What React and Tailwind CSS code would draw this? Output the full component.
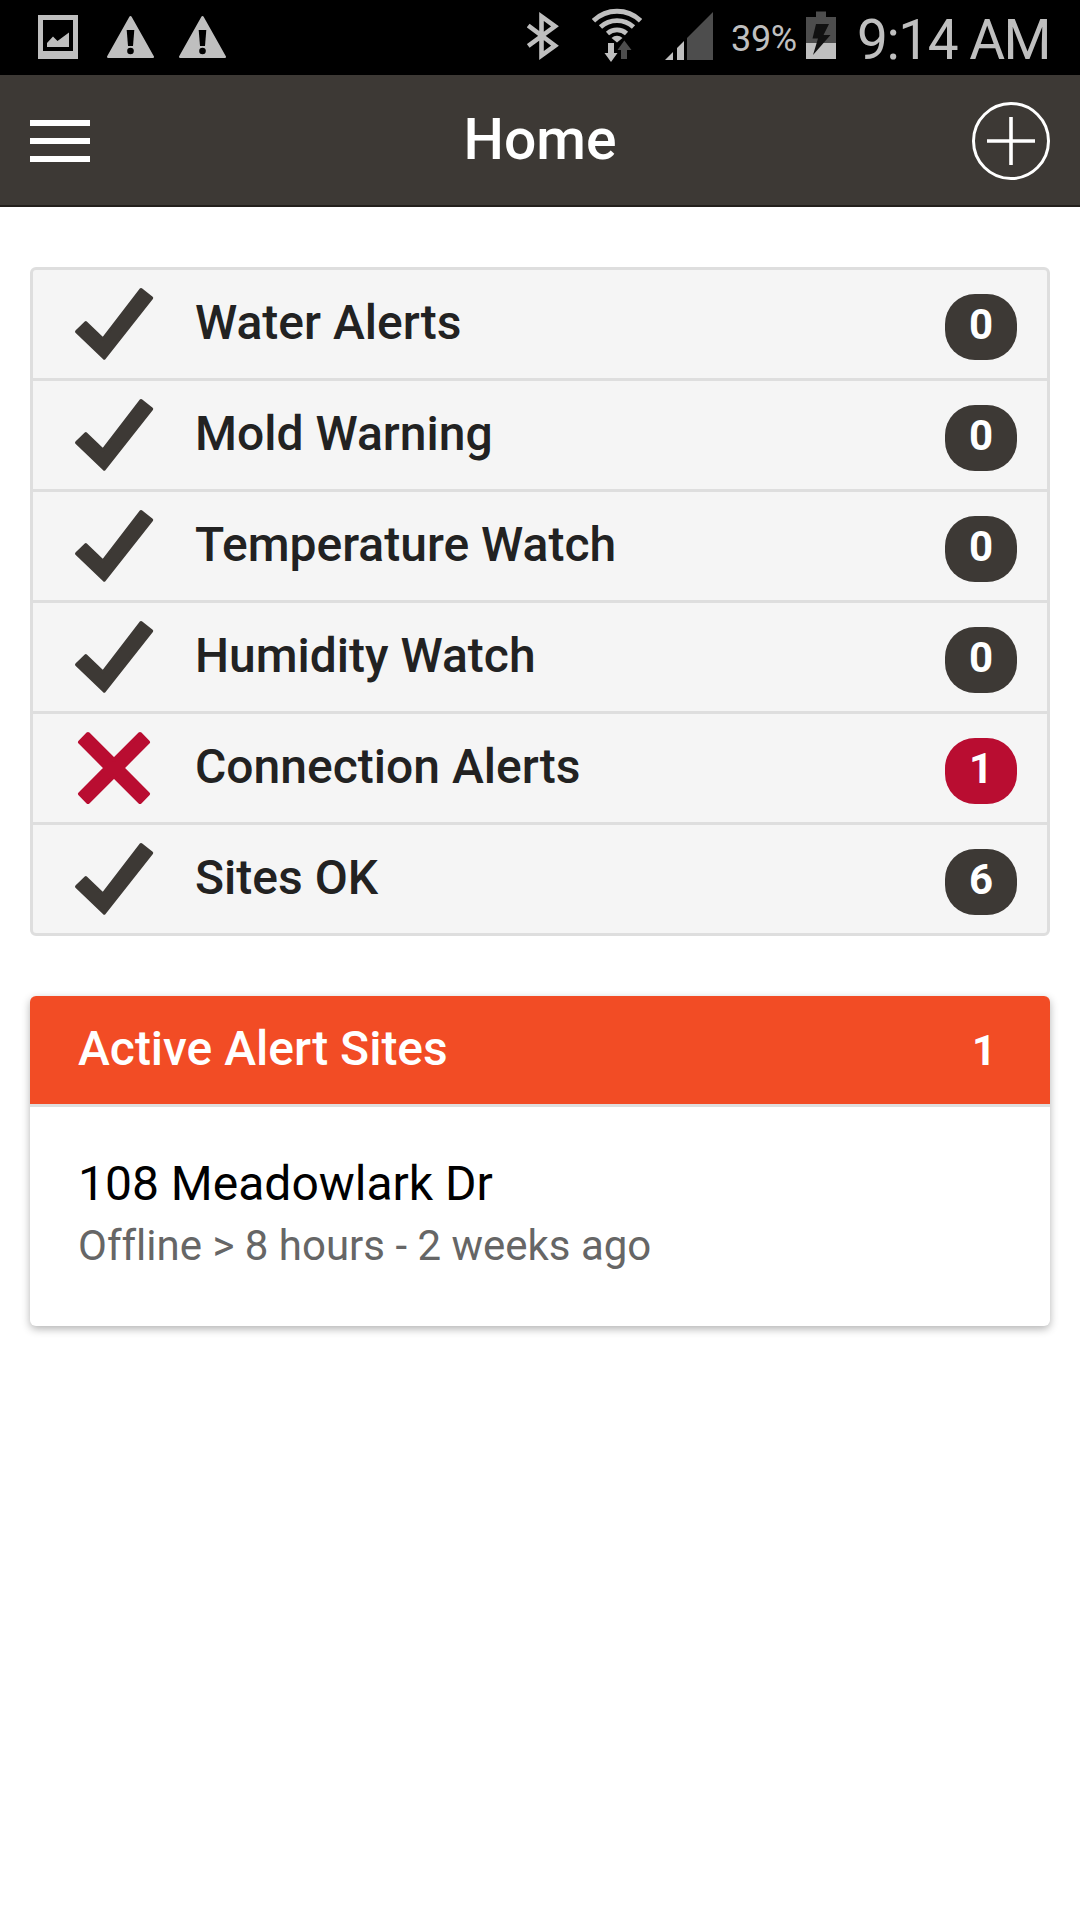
const rows = [
  { label: 'Water Alerts', count: 0, ok: true },
  { label: 'Mold Warning', count: 0, ok: true },
  { label: 'Temperature Watch', count: 0, ok: true },
  { label: 'Humidity Watch', count: 0, ok: true },
  { label: 'Connection Alerts', count: 1, ok: false },
  { label: 'Sites OK', count: 6, ok: true },
];

function PictureIcon() {
  return (
    <svg className="ml-[38px] h-[75px] w-10 shrink-0" viewBox="38 0 40 75" fill="#bfbfbf">
      <path fillRule="evenodd" d="M38 15H78V59H38ZM43 20V51H73V20Z" />
      <path d="M47 47V43L53 36.500L57.500 41L69 32.500V47Z" />
    </svg>
  );
}

function WarningIcon({ className }) {
  return (
    <svg className={className} viewBox="107 0 47 75">
      <path d="M130.500 17.300L152.700 56.800H108.300Z" fill="#bfbfbf" stroke="#bfbfbf" strokeWidth="2.600" strokeLinejoin="round" />
      <path d="M126.700 30H134.300L133 46H128Z" fill="#000" />
      <circle cx="130.500" cy="51" r="3.300" fill="#000" />
    </svg>
  );
}

function BluetoothIcon() {
  return (
    <svg className="h-[75px] w-8 shrink-0" viewBox="527 0 32 75" fill="none" stroke="#bfbfbf" strokeWidth="4.600">
      <path d="M528.200 25.500L555 45.700L541.500 55.500V16.500L555 26.300L528.200 46" />
    </svg>
  );
}

function WifiIcon() {
  return (
    <svg className="ml-[33px] h-[75px] w-[50px] shrink-0" viewBox="592 0 50 75">
      <g fill="none" stroke="#bfbfbf" strokeWidth="4.800">
        <path d="M593.500 20.700A34 34 0 0 1 640.500 20.700" />
        <path d="M600.500 27A24.500 24.500 0 0 1 633.500 27" />
        <path d="M607.500 33.500A14.500 14.500 0 0 1 626.500 33.500" />
      </g>
      <path d="M611.500 38A8 8 0 0 1 622.500 38L617 42.500Z" fill="#bfbfbf" />
      <path d="M608 43H614V53H617.500L611 62L604.500 53H608Z" fill="#bfbfbf" />
      <path d="M621 59H627V50H631.500L624.300 40.500L617.500 50H621Z" fill="#4d4d4d" />
    </svg>
  );
}

function SignalIcon() {
  return (
    <svg className="ml-[23px] h-[75px] w-[49px] shrink-0" viewBox="665 0 49 75">
      <path d="M687 38L713 12V60H687Z" fill="#4d4d4d" />
      <path d="M665 60L673 52V60ZM677 60V48L684 41V60Z" fill="#bfbfbf" />
    </svg>
  );
}

function BatteryIcon() {
  return (
    <svg className="ml-[8px] h-[75px] w-[30px] shrink-0" viewBox="806 0 30 75">
      <path d="M816 11.500H826V17H836V59H806V17H816Z" fill="#4d4d4d" />
      <path d="M806 43H836V59H806Z" fill="#bfbfbf" />
      <path d="M816 24H829L823.500 35H830.500L813 55L818 38.500H812.500Z" fill="#111" />
    </svg>
  );
}

function StatusBar() {
  return (
    <div className="flex h-[75px] items-center overflow-hidden bg-black text-[#bfbfbf]">
      <PictureIcon />
      <WarningIcon className="ml-[29px] h-[75px] w-[47px] shrink-0" />
      <WarningIcon className="ml-[25px] h-[75px] w-[47px] shrink-0" />
      <div className="ml-auto flex items-center">
        <BluetoothIcon />
        <WifiIcon />
        <SignalIcon />
        <span className="ml-[17px] w-[67px] whitespace-nowrap pt-[2px] text-[36px] leading-none tracking-[-0.3px]">39%</span>
        <BatteryIcon />
        <span className="ml-[21px] w-[223px] whitespace-nowrap pt-[5px] text-[55px] leading-none tracking-[-1.5px]">9:14 AM</span>
      </div>
    </div>
  );
}

function Header() {
  return (
    <header className="flex h-[132px] items-center justify-between border-b-2 border-[#231f1c] bg-[#3d3935] px-[30px] pt-[2px]">
      <button className="flex w-[78px] flex-col gap-3" aria-label="Menu">
        <span className="h-1.5 w-[60px] bg-white" />
        <span className="h-1.5 w-[60px] bg-white" />
        <span className="h-1.5 w-[60px] bg-white" />
      </button>
      <h1 className="pb-1 text-[57px] leading-none font-medium text-white">Home</h1>
      <button aria-label="Add">
        <svg className="size-[78px]" viewBox="0 0 78 78" fill="none" stroke="#fff">
          <circle cx="39" cy="39" r="37.500" strokeWidth="3" />
          <path d="M39 15V63M15 39H63" strokeWidth="3.600" />
        </svg>
      </button>
    </header>
  );
}

function CheckIcon() {
  return (
    <svg className="h-[74px] w-20 shrink-0" viewBox="0 0 80 74" fill="#3d3935" stroke="#3d3935" strokeWidth="3" strokeLinejoin="round">
      <path d="M2.500 44.700L11.800 35.700L29 52L67 2.500L77.700 11L30.200 71.200Z" />
    </svg>
  );
}

function CrossIcon() {
  return (
    <svg className="h-[74px] w-20 shrink-0" viewBox="0 0 80 74" fill="#b90d31" stroke="#b90d31" strokeWidth="4" strokeLinejoin="round">
      <path d="M14 3L40 28.800L66 3L74 11.200L48.200 37L74 62.800L66 71L40 45.200L14 71L6 62.800L31.800 37L6 11.200Z" />
    </svg>
  );
}

function AlertRow({ label, count, ok }) {
  return (
    <li className="flex h-[111px] items-center border-b-[3px] border-[#dedede] pr-[30px] pl-[41px] last:h-[108px] last:border-b-0">
      {ok ? <CheckIcon /> : <CrossIcon />}
      <span className="ml-[41px] flex-1 pb-[2px] text-[48px] leading-none font-medium text-[#222]">{label}</span>
      <span
        className={
          'mt-[6px] flex h-[66px] w-[72px] justify-center rounded-[30px] pt-[10px] text-[42px] leading-none font-bold text-white ' +
          (ok ? 'bg-[#3d3935]' : 'bg-[#b90d31]')
        }
      >
        {count}
      </span>
    </li>
  );
}

export default function App() {
  return (
    <div className="min-h-[1920px] w-[1080px] bg-white font-['Roboto',sans-serif]">
      <StatusBar />
      <Header />
      <main className="px-[30px] pt-[60px]">
        <ul className="rounded-md border-[3px] border-[#dedede] bg-[#f5f5f5]">
          {rows.map((row) => (
            <AlertRow key={row.label} {...row} />
          ))}
        </ul>
        <section className="mt-[60px] h-[330px] overflow-hidden rounded-md bg-white shadow-[0_3px_9px_rgba(0,0,0,0.3)]">
          <div className="flex h-[111px] items-center justify-between border-b-[3px] border-[#dedede] bg-[#f24c25] pr-[54px] pl-12 text-white">
            <h2 className="pb-[2px] text-[48px] leading-none font-medium">Active Alert Sites</h2>
            <span className="pt-[2px] text-[42px] leading-none font-bold">1</span>
          </div>
          <div className="pt-[53px] pl-12">
            <p className="text-[48px] leading-none text-black">108 Meadowlark Dr</p>
            <p className="mt-[17px] text-[42px] leading-none text-[#666] [font-variant-ligatures:none]">
              Offline &gt; 8 hours - 2 weeks ago
            </p>
          </div>
        </section>
      </main>
    </div>
  );
}
